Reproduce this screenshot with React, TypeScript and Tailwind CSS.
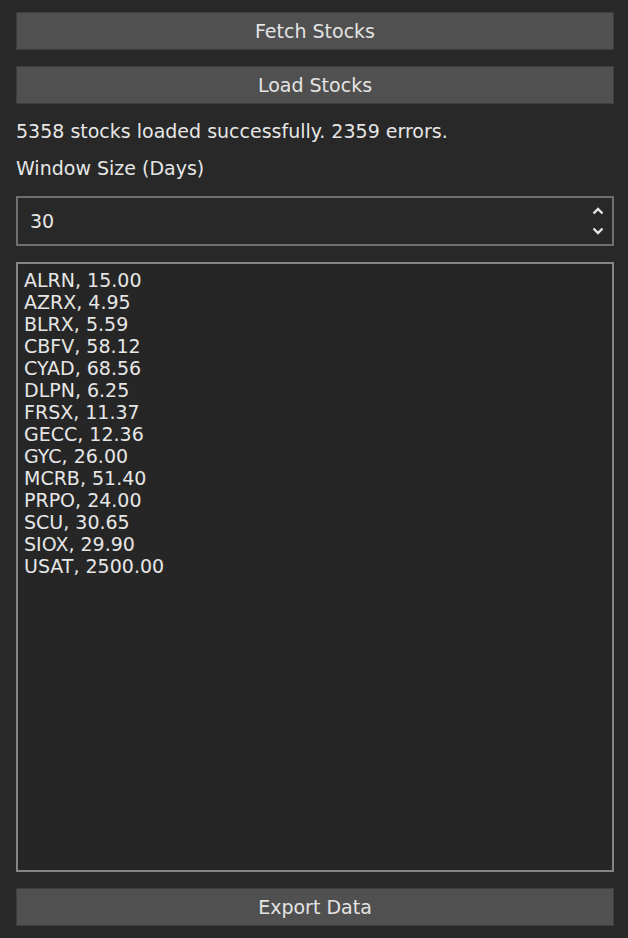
import React from "react";

const stocks = [
  "ALRN, 15.00",
  "AZRX, 4.95",
  "BLRX, 5.59",
  "CBFV, 58.12",
  "CYAD, 68.56",
  "DLPN, 6.25",
  "FRSX, 11.37",
  "GECC, 12.36",
  "GYC, 26.00",
  "MCRB, 51.40",
  "PRPO, 24.00",
  "SCU, 30.65",
  "SIOX, 29.90",
  "USAT, 2500.00",
];

function Button({ label }: { label: string }) {
  return (
    <button className="w-full h-[38px] bg-[#505050] border border-[#3e3e3e] text-[#e4e4e4] text-[19px] leading-none">
      {label}
    </button>
  );
}

function Chevron({ up }: { up?: boolean }) {
  return (
    <svg width="12" height="8" viewBox="0 0 12 8" className="block">
      <path
        d={up ? "M1.5 6.5 L6 2 L10.5 6.5" : "M1.5 1.5 L6 6 L10.5 1.5"}
        fill="none"
        stroke="#e6e6e6"
        strokeWidth="2.4"
      />
    </svg>
  );
}

export default function App() {
  return (
    <div
      className="w-[628px] h-[938px] bg-[#282828] text-[#e6e6e6] pl-4 pr-[14px] pt-3 flex flex-col"
      style={{ fontFamily: '"DejaVu Sans", sans-serif' }}
    >
      <Button label="Fetch Stocks" />
      <div className="mt-4">
        <Button label="Load Stocks" />
      </div>
      <p className="mt-4 text-[19px] leading-[22px]">
        5358 stocks loaded successfully. 2359 errors.
      </p>
      <p className="mt-[15px] text-[19px] leading-[22px]">Window Size (Days)</p>
      <div className="mt-[17px] h-[50px] border-2 border-[#6f6f6f] bg-[#282828] flex items-center justify-between pl-3 pr-2">
        <span className="text-[19px]">30</span>
        <div className="flex flex-col gap-[12px]">
          <Chevron up />
          <Chevron />
        </div>
      </div>
      <div className="mt-4 h-[610px] border-2 border-[#858585] bg-[#262626] px-[6px] pt-[5px] text-[19px] leading-[22px]">
        {stocks.map((s) => (
          <div key={s}>{s}</div>
        ))}
      </div>
      <div className="mt-4">
        <Button label="Export Data" />
      </div>
    </div>
  );
}
